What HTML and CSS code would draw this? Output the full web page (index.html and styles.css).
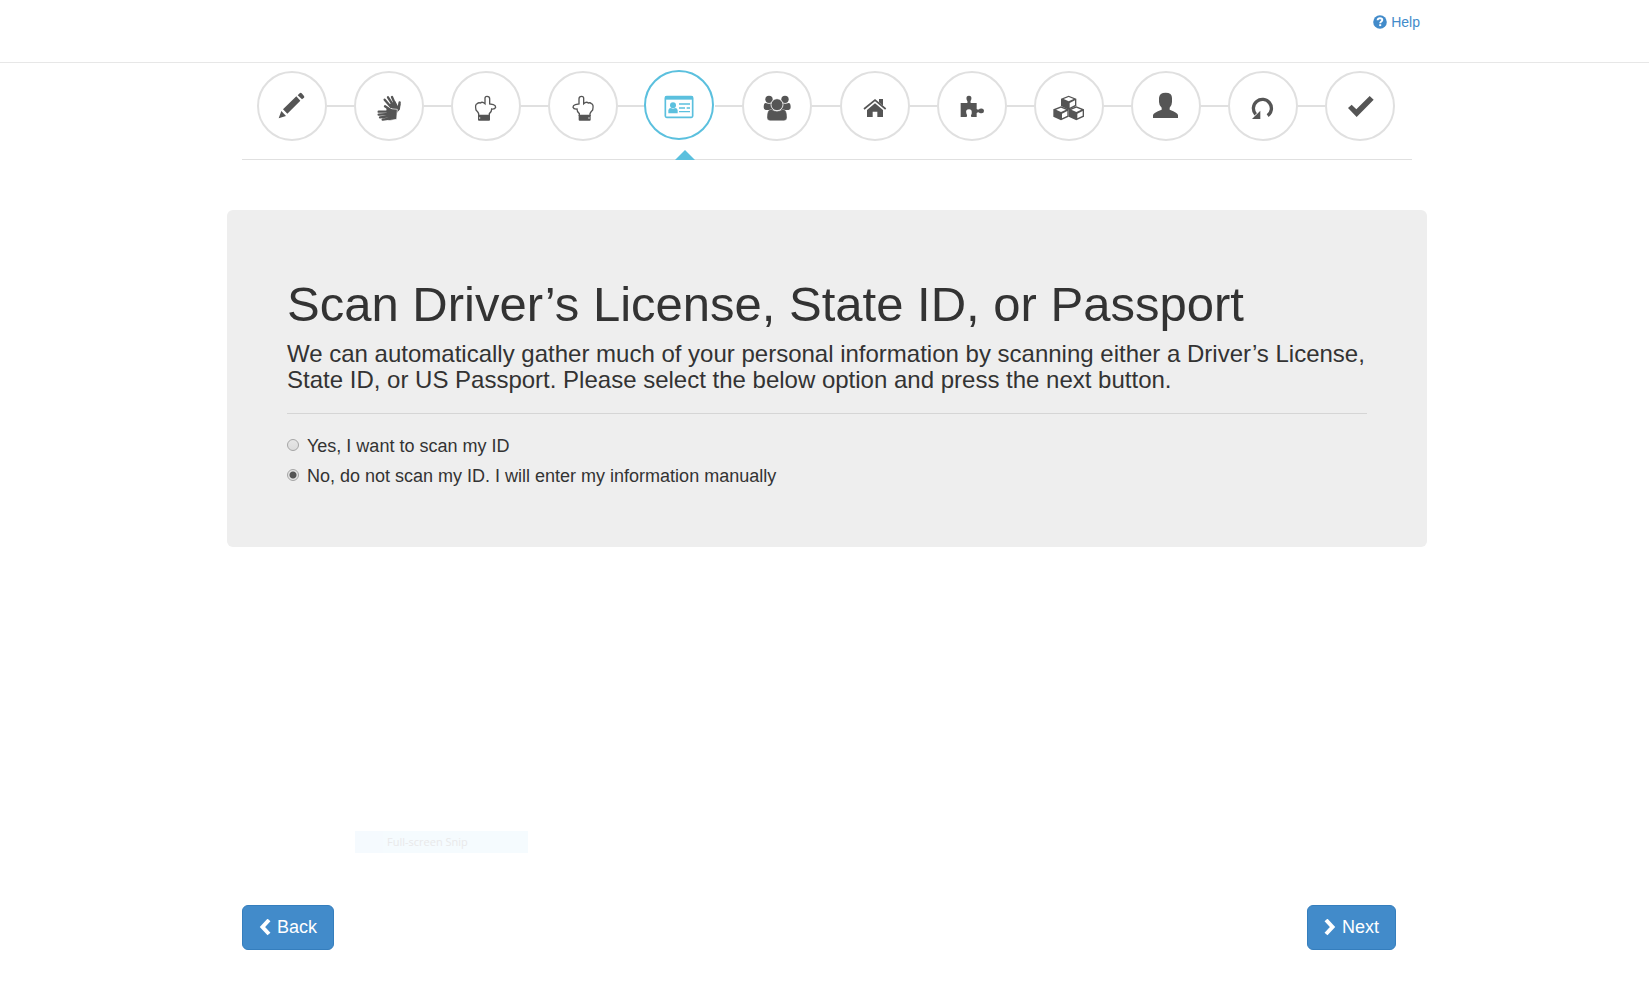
FILE: index.html
```html
<!DOCTYPE html>
<html lang="en">
<head>
<meta charset="utf-8">
<meta name="viewport" content="width=device-width, initial-scale=1">
<title>Scan ID</title>
<link rel="stylesheet" href="styles.css">
</head>
<body>
<header class="topbar">
  <div class="container topbar-inner">
    <a class="help" href="#help">
      <svg class="help-icon" viewBox="0 0 14 14" aria-hidden="true"><circle cx="7" cy="7" r="6.8" fill="currentColor"/><path d="M4.600 5.300C4.700 3.800 5.800 3.200 7 3.200c1.400 0 2.300.7 2.300 1.900 0 1.500-2.100 1.500-2.100 3.100" fill="none" stroke="#fff" stroke-width="1.900"/><rect x="6.200" y="9.200" width="2" height="1.900" fill="#fff"/></svg>
      <span>Help</span>
    </a>
  </div>
</header>

<main class="container page">
  <nav class="steps" aria-label="Progress">
    <a class="step" href="#sign" aria-label="Sign"><svg viewBox="0 0 96 96"><path d="M21 58L61 19 73 32 34 71zM65 16l6-6q3-3 6 0l7 8q2 3 0 5l-6 5zM8 85l8-22 14 15z"/></svg></a>
    <span class="link"></span>
    <a class="step" href="#hands" aria-label="Hands"><svg viewBox="0 0 96 96"><g fill="none" stroke="currentColor" stroke-width="7" stroke-linecap="round"><path d="M62 48L45 22M67 44L57 21M54 51L35 29M76 58L80 37"/></g><path d="M46 44L67 34 75 49 83 40 81 57 71 70z"/><path d="M40 50l12 6 21 2-2 30-24 4-8-30z" stroke="#fff" stroke-width="2"/><g fill="none" stroke="currentColor" stroke-width="7" stroke-linecap="round"><path d="M48 65L17 65M48 72L17 74M48 79L21 82M50 86L29 89M54 61L36 49"/></g></svg></a>
    <span class="link"></span>
    <a class="step" href="#right" aria-label="Right hand"><svg viewBox="0 0 96 96"><path d="M45 39V25q0-6 6-6 8 0 8 7V42l11 2q7 2 7 8-2 6-12 5 0 9-7 14v5H26v-5Q24 66 18 60q-4-17 4-19 3-4 9-2 6-5 14 2z" fill="none" stroke="currentColor" stroke-width="4"/><path d="M24 75h36v14q0 3-3 3H27q-3 0-3-3z"/><circle cx="29" cy="84" r="2" fill="#fff"/></svg></a>
    <span class="link"></span>
    <a class="step" href="#left" aria-label="Left hand"><svg viewBox="0 0 96 96"><g transform="matrix(-1 0 0 1 95 0)"><path d="M45 39V25q0-6 6-6 8 0 8 7V42l11 2q7 2 7 8-2 6-12 5 0 9-7 14v5H26v-5Q24 66 18 60q-4-17 4-19 3-4 9-2 6-5 14 2z" fill="none" stroke="currentColor" stroke-width="4"/><path d="M24 75h36v14q0 3-3 3H27q-3 0-3-3z"/><circle cx="29" cy="84" r="2" fill="#fff"/></g></svg></a>
    <span class="link"></span>
    <a class="step active" href="#scan" aria-label="Scan ID" aria-current="step"><svg viewBox="0 0 96 96"><rect x="7" y="23" width="82" height="62" rx="4" fill="none" stroke="currentColor" stroke-width="5"/><path d="M7 22h82v10H7z"/><circle cx="30" cy="49" r="9"/><path d="M16 73V64q1-7 8-7 6 4 12 0 7 0 8 7v9zM48 43h33v4H48zM48 55h18v4H48zM71 55h10v4H71zM48 66h33v4H48z"/></svg></a>
    <span class="link"></span>
    <a class="step" href="#family" aria-label="Household"><svg viewBox="0 0 96 96"><circle cx="24" cy="28" r="11"/><circle cx="72" cy="28" r="11"/><path d="M8 52q0-13 6-13 10 4 20 0l4 21H14q-6 0-6-8zM89 52q0-13-6-13-10 4-20 0l-4 21h24q6 0 6-8z"/><path d="M18 82q0-24 13-24 17 11 34 0 13 0 13 24 0 10-9 10H27q-9 0-9-10z" stroke="#fff" stroke-width="1"/><circle cx="48" cy="44" r="18" stroke="#fff" stroke-width="2.500"/></svg></a>
    <span class="link"></span>
    <a class="step" href="#home" aria-label="Home"><svg viewBox="0 0 96 96"><path d="M15 57L48 30l32 27" fill="none" stroke="currentColor" stroke-width="5"/><path d="M60 27h12v20L60 37zM24 60l24-20 24 20v21H55V65H41v16H24z"/></svg></a>
    <span class="link"></span>
    <a class="step" href="#extras" aria-label="Extras"><svg viewBox="0 0 96 96"><path d="M14 39h20q2-5-2-10-3-12 7-12 9 0 7 11-4 6-2 11h18v18q5 4 9-1 13-3 13 7 0 9-13 6-4-5-9 0v12H46q-3-5 1-10 2-13-8-13-11 0-8 12 4 6 1 11H14z"/></svg></a>
    <span class="link"></span>
    <a class="step" href="#items" aria-label="Items"><svg viewBox="0 0 96 96"><defs><g id="cube"><path d="M23 0L46 9V31L23 42 0 31V9z"/><path d="M23 4L38 10 23 17 8 10zM26 22l16-8v14L26 36z" fill="#fff"/></g></defs><use href="#cube" x="24" y="17"/><use href="#cube" x="1" y="49"/><use href="#cube" x="47" y="49"/></svg></a>
    <span class="link"></span>
    <a class="step" href="#person" aria-label="Person"><svg viewBox="0 0 96 96"><path d="M47 8q19 0 19 16v12q0 10-7 17v6q25 9 25 17v8H9v-8q0-8 26-17v-6q-8-7-8-17V24Q28 8 47 8z"/></svg></a>
    <span class="link"></span>
    <a class="step" href="#review" aria-label="Review"><svg viewBox="0 0 96 96"><path d="M62 77A27 27 0 1 0 26 73" fill="none" stroke="currentColor" stroke-width="10"/><path d="M15 87h25V62z"/></svg></a>
    <span class="link"></span>
    <a class="step" href="#done" aria-label="Done"><svg viewBox="0 0 96 96"><path d="M12 54L23 44 37 58 77 18 89 29 38 81z"/></svg></a>
    <span class="pointer"></span>
  </nav>

  <section class="panel">
    <h1>Scan Driver’s License, State ID, or Passport</h1>
    <p class="lead">We can automatically gather much of your personal information by scanning either a Driver’s License, State ID, or US Passport. Please select the below option and press the next button.</p>
    <hr>
    <form class="options">
      <label><input type="radio" name="scan"><span>Yes, I want to scan my ID</span></label>
      <label><input type="radio" name="scan" checked><span>No, do not scan my ID. I will enter my information manually</span></label>
    </form>
  </section>

  <div class="actions">
    <button type="button" class="btn"><svg viewBox="0 0 12 18" aria-hidden="true"><path d="M10 1L3.500 8 10 15" fill="none" stroke="currentColor" stroke-width="4"/></svg>Back</button>
    <button type="button" class="btn"><svg viewBox="0 0 12 18" aria-hidden="true"><path d="M2 1l6.500 7L2 15" fill="none" stroke="currentColor" stroke-width="4"/></svg>Next</button>
  </div>
</main>
<div class="snip">Full-screen Snip</div>
</body>
</html>
```
FILE: styles.css
```css
* {
  box-sizing: border-box;
}

body {
  margin: 0;
  min-height: 100vh;
  display: flex;
  flex-direction: column;
  position: relative;
  background: #fff;
  color: #333;
  font-family: "Liberation Sans", Arial, sans-serif;
  font-size: 14px;
  line-height: 20px;
}

.topbar {
  height: 63px;
  padding-left: 5px;
  border-bottom: 1px solid #e7e7e7;
}

.container {
  width: 100%;
  max-width: 1200px;
  margin: 0 auto;
}

.topbar-inner {
  display: flex;
  justify-content: flex-end;
  padding: 12px 7px 0 15px;
}

.help {
  display: flex;
  align-items: center;
  gap: 4px;
  color: #428bca;
  text-decoration: none;
}

.help-icon {
  width: 14px;
  height: 14px;
}

.page {
  flex: 1;
  display: flex;
  flex-direction: column;
  max-width: 1205px;
  padding: 0 0 55px 5px;
}

.steps {
  position: relative;
  display: flex;
  align-items: center;
  margin: 0 15px;
  padding: 8px 17px 18px 15px;
  border-bottom: 1px solid #e0e0e0;
}

.step {
  flex: none;
  width: 70px;
  height: 70px;
  display: flex;
  align-items: center;
  justify-content: center;
  border: 2px solid #e0e0e0;
  border-radius: 50%;
  color: #555;
}

.step svg {
  width: 32px;
  height: 32px;
  fill: currentColor;
}

.step.active {
  margin: -2px 1px 0 -1px;
  border-color: #5bc0de;
  color: #5bc0de;
}

.link {
  flex: 1;
  height: 2px;
  background: #e0e0e0;
}

.pointer {
  position: absolute;
  left: 433px;
  bottom: -1px;
  border: 10px solid transparent;
  border-top: 0;
  border-bottom-color: #5bc0de;
}

.panel {
  margin-top: 50px;
  padding: 67px 60px 56px;
  border-radius: 6px;
  background: #eee;
}

h1 {
  margin: 0 0 10px;
  font-size: 49px;
  font-weight: 500;
  line-height: 54px;
}

.lead {
  margin: 0;
  font-size: 24px;
  line-height: 26px;
}

hr {
  margin: 20px 0 17px;
  border: 0;
  border-top: 1px solid #d5d5d5;
}

.options {
  display: flex;
  flex-direction: column;
  font-size: 18px;
  line-height: 30px;
}

.options label {
  display: flex;
  align-items: flex-start;
  gap: 8px;
}

.options input {
  appearance: none;
  width: 12px;
  height: 12px;
  margin: 8px 0 0;
  border: 1px solid #a5a5a5;
  border-radius: 50%;
  background: linear-gradient(#e6e6e6, #dcdcdc);
}

.options input:checked {
  background: radial-gradient(circle, #555 0 3px, #e4e4e4 4px);
}

.actions {
  display: flex;
  justify-content: space-between;
  margin-top: auto;
  padding: 20px 31px 0 15px;
}

.btn {
  display: flex;
  align-items: center;
  gap: 6px;
  padding: 10px 16px;
  border: 1px solid #357ebd;
  border-radius: 6px;
  background: #428bca;
  color: #fff;
  font-family: inherit;
  font-size: 18px;
  line-height: 23px;
}

.btn svg {
  width: 12px;
  height: 18px;
}

.snip {
  position: absolute;
  left: 355px;
  top: 831px;
  width: 173px;
  height: 22px;
  padding-left: 32px;
  background: linear-gradient(90deg, #f5fafe 28px, #f5fbfe 28px);
  color: #e9e9ea;
  font-family: "Open Sans", sans-serif;
  font-size: 11px;
  line-height: 22px;
}
```
